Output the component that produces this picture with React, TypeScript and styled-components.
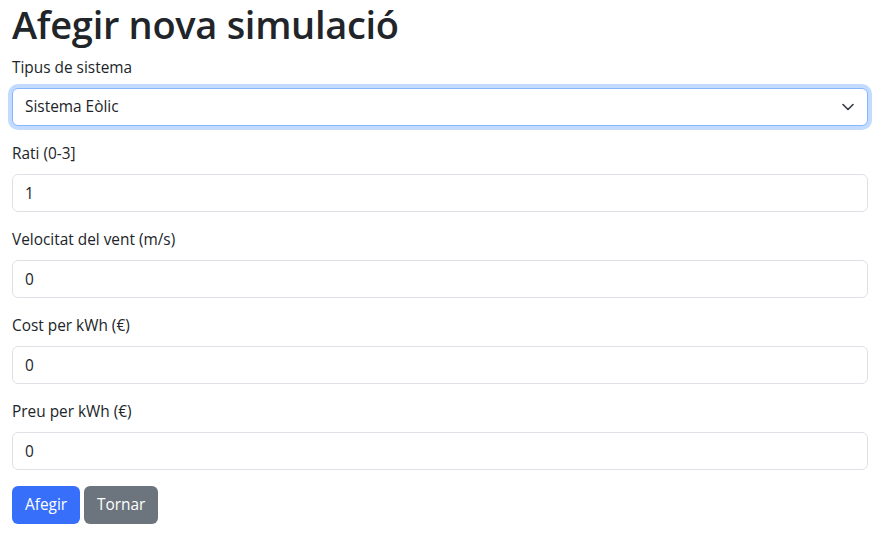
import React from "react";
import styled, { createGlobalStyle } from "styled-components";

const Global = createGlobalStyle`
  * { box-sizing: border-box; }
  body {
    margin: 0;
    font-family: "Open Sans", "Noto Sans", sans-serif;
    font-size: 15.4px;
    line-height: 24px;
    color: #212529;
    background: #fff;
  }
`;

const Page = styled.div`
  padding: 0 17px 0 12px;
`;

const Title = styled.h1`
  margin: 0 0 8px;
  font-size: 38px;
  font-weight: 600;
  line-height: 48px;
  letter-spacing: -0.3px;
`;

const Field = styled.div`
  margin-bottom: 16px;
`;

const Label = styled.label`
  display: block;
  margin-bottom: 8px;
  line-height: 24px;
`;

const Input = styled.input`
  display: block;
  width: 100%;
  height: 38px;
  padding: 6px 12px;
  font: inherit;
  color: #212529;
  background: #fff;
  border: 1px solid #dee2e6;
  border-radius: 6px;
  outline: none;
`;

const SelectWrap = styled.div`
  position: relative;
`;

const Select = styled.select<{ $focus?: boolean }>`
  display: block;
  width: 100%;
  height: 38px;
  padding: 6px 36px 6px 12px;
  font: inherit;
  color: #212529;
  background: #fff;
  appearance: none;
  border: 1px solid ${(p) => (p.$focus ? "#86b7fe" : "#dee2e6")};
  border-radius: 6px;
  outline: none;
  box-shadow: ${(p) => (p.$focus ? "0 0 0 4px rgba(13,110,253,0.25)" : "none")};
`;

const Chevron = styled.svg`
  position: absolute;
  right: 14px;
  top: 15px;
  width: 12px;
  height: 8px;
  pointer-events: none;
`;

const Actions = styled.div`
  display: flex;
  gap: 4px;
`;

const Button = styled.button<{ $variant: "primary" | "secondary" }>`
  height: 38px;
  padding: 6px 12px;
  font: inherit;
  color: #fff;
  border: 1px solid transparent;
  border-radius: 6px;
  background: ${(p) => (p.$variant === "primary" ? "#386ffa" : "#6c757d")};
`;

const fields = [
  { label: "Rati (0-3]", value: "1" },
  { label: "Velocitat del vent (m/s)", value: "0" },
  { label: "Cost per kWh (€)", value: "0" },
  { label: "Preu per kWh (€)", value: "0" },
];

export default function App() {
  return (
    <>
      <Global />
      <Page>
        <Title>Afegir nova simulació</Title>
        <Field>
          <Label>Tipus de sistema</Label>
          <SelectWrap>
            <Select $focus defaultValue="eolic">
              <option value="eolic">Sistema Eòlic</option>
            </Select>
            <Chevron viewBox="0 0 12 8">
              <path d="M1 1.5 6 6.5 11 1.5" fill="none" stroke="#343a40" strokeWidth="1.6" strokeLinecap="round" strokeLinejoin="round" />
            </Chevron>
          </SelectWrap>
        </Field>
        {fields.map((f) => (
          <Field key={f.label}>
            <Label>{f.label}</Label>
            <Input defaultValue={f.value} />
          </Field>
        ))}
        <Actions>
          <Button $variant="primary">Afegir</Button>
          <Button $variant="secondary">Tornar</Button>
        </Actions>
      </Page>
    </>
  );
}
